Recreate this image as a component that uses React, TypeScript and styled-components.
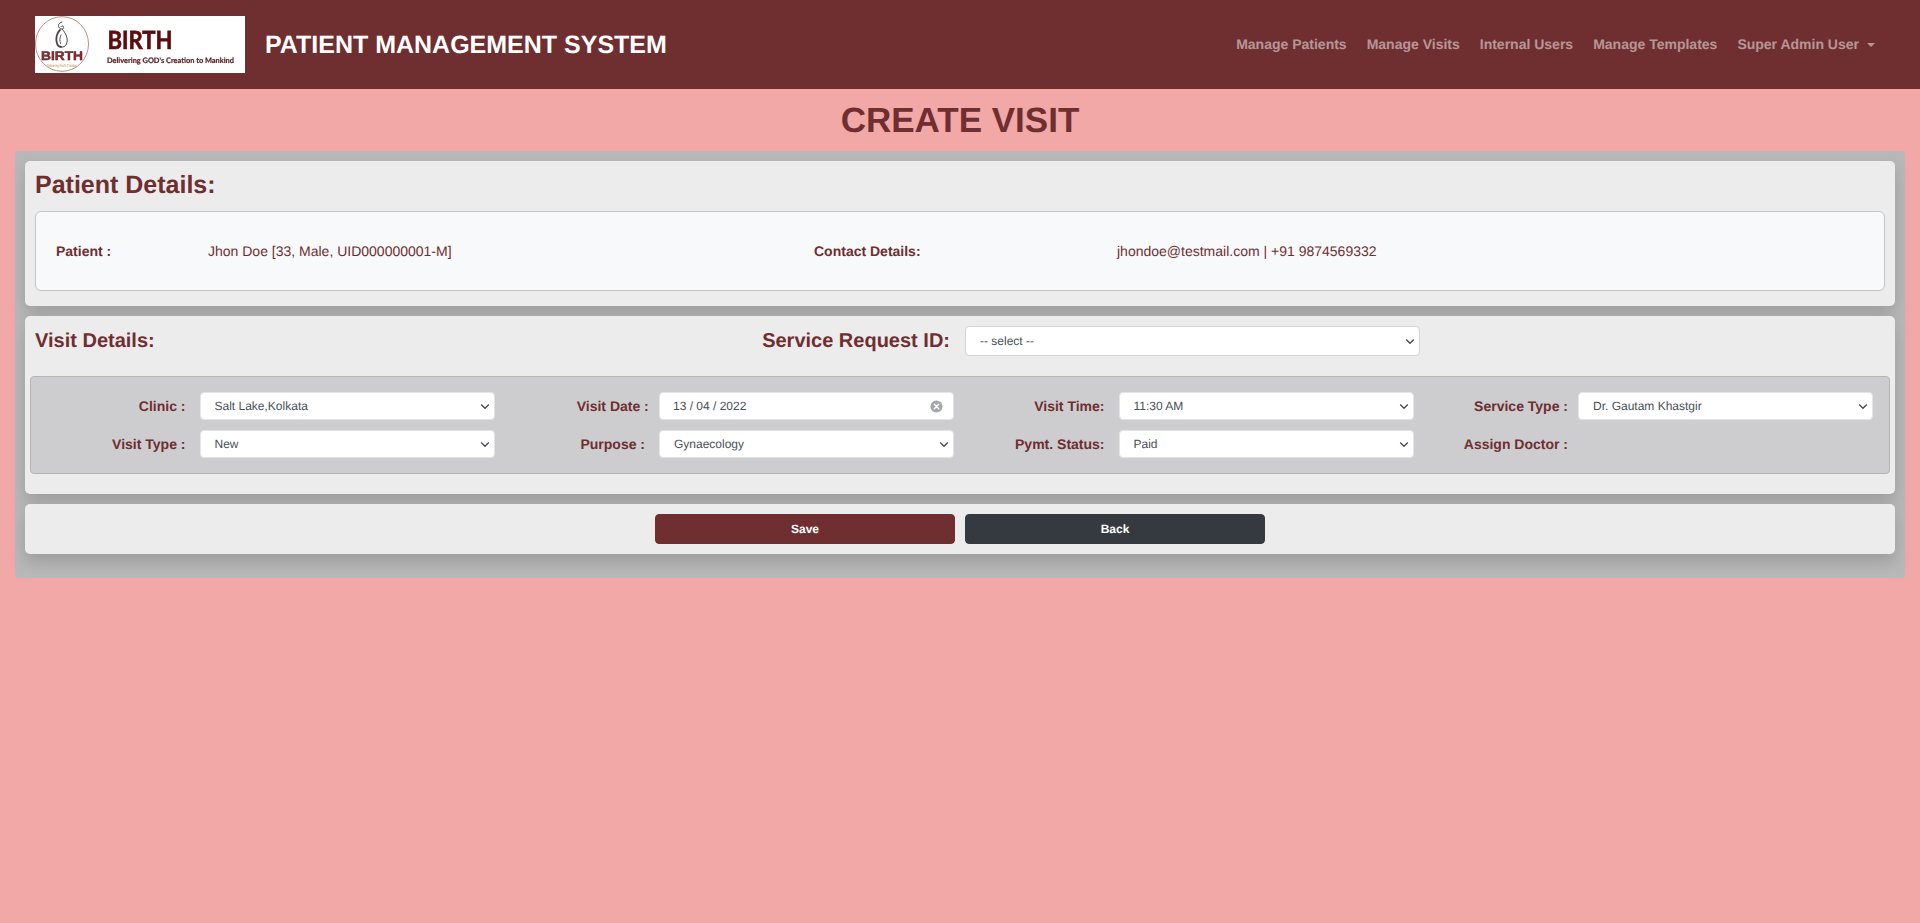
import React from "react";
import styled, { createGlobalStyle } from "styled-components";

const MAROON = "#6f2e30";
const PINK = "#f1a8a6";
const CHEVRON =
  "url(\"data:image/svg+xml,%3Csvg xmlns='http://www.w3.org/2000/svg' width='10' height='7' viewBox='0 0 10 7'%3E%3Cpath d='M1.200 1.500l3.800 3.800 3.800-3.800' fill='none' stroke='%23484b52' stroke-width='1.300'/%3E%3C/svg%3E\")";

const Global = createGlobalStyle`
  html, body { margin: 0; padding: 0; height: 100%; }
  body {
    background: ${PINK};
    font-family: "Liberation Sans", Arial, sans-serif;
    color: ${MAROON};
    text-rendering: geometricPrecision;
  }
  * { box-sizing: border-box; }
`;

const Page = styled.div`
  min-height: 923px;
  background: ${PINK};
`;

const Header = styled.header`
  height: 89px;
  background: ${MAROON};
  display: flex;
  align-items: center;
  padding: 0 45px 0 35px;
`;

const LogoFrame = styled.div`
  width: 210px;
  height: 57px;
  background: #fff;
  flex: none;
  margin-top: -1px;
`;

const LogoArt = styled.svg`
  display: block;
  filter: blur(0.35px);
`;

const Brand = styled.div`
  margin-left: 20px;
  padding-top: 1px;
  color: #fff;
  font-size: 25px;
  font-weight: 700;
  white-space: nowrap;
`;

const Nav = styled.nav`
  margin-left: auto;
  padding-bottom: 2px;
  display: flex;
  align-items: center;
  gap: 20px;
`;

const NavLink = styled.a`
  color: rgba(255, 255, 255, 0.5);
  font-size: 14px;
  font-weight: 700;
  white-space: nowrap;
`;

const Caret = styled.span`
  display: inline-block;
  margin-left: 8px;
  vertical-align: 2px;
  border-top: 4.2px solid rgba(255, 255, 255, 0.5);
  border-left: 4.2px solid transparent;
  border-right: 4.2px solid transparent;
`;

const Title = styled.h1`
  margin: 0;
  height: 62px;
  line-height: 63px;
  text-align: center;
  font-size: 35px;
  font-weight: 700;
  color: ${MAROON};
`;

const Panel = styled.main`
  margin: 0 15px;
  height: 427px;
  padding: 10px;
  background: #b8b8b8;
  border-radius: 4px;
  display: flex;
  flex-direction: column;
  gap: 10px;
`;

const Card = styled.section`
  background: #ececec;
  border-radius: 5px;
  box-shadow: 0 8px 16px rgba(0, 0, 0, 0.15);
`;

const PatientCard = styled(Card)`
  height: 145px;
  padding: 0 10px;
`;

const PatientHeading = styled.h3`
  margin: 0;
  height: 50px;
  line-height: 49px;
  font-size: 25px;
  font-weight: 700;
`;

const InfoBox = styled.div`
  height: 80px;
  background: #f8f9fa;
  border: 1px solid #c4c4c4;
  border-radius: 6px;
  display: grid;
  grid-template-columns: 152px 606px 303px 1fr;
  align-items: center;
  padding-left: 20px;
  font-size: 14px;
`;

const InfoLabel = styled.div`
  font-weight: 700;
`;

const VisitCard = styled(Card)`
  height: 178px;
  padding: 0 5px;
`;

const VisitHead = styled.div`
  height: 50px;
  margin-bottom: 10px;
  display: flex;
  align-items: center;
  padding-left: 5px;
`;

const VisitHeading = styled.h4`
  margin: 0;
  font-size: 20px;
  font-weight: 700;
`;

const RequestLabel = styled.label`
  margin-left: auto;
  font-size: 20px;
  font-weight: 700;
`;

const RequestSelect = styled.select`
  appearance: none;
  width: 455px;
  height: 30px;
  margin: 0 470px 0 15px;
  padding: 0 14px;
  background: #fff ${CHEVRON} no-repeat right 4px center;
  border: 1px solid #d2d4d8;
  border-radius: 4px;
  color: #495057;
  font: 12px "Liberation Sans", Arial, sans-serif;
  text-rendering: geometricPrecision;
`;

const FieldBox = styled.div`
  height: 98px;
  background: #cdcdcf;
  border: 1px solid #b4b4b4;
  border-radius: 4px;
  display: grid;
  grid-template-columns: repeat(4, 164.5px 295px);
  grid-auto-rows: 28px;
  row-gap: 10px;
  align-items: center;
  padding: 15px 0 0 4px;
`;

const FieldLabel = styled.label<{ $center?: boolean; $end: number }>`
  font-size: 14px;
  font-weight: 700;
  text-align: ${(p) => (p.$center ? "center" : "right")};
  padding-left: ${(p) => (p.$center ? 72 : 0)}px;
  padding-right: ${(p) => p.$end}px;
  white-space: nowrap;
`;

const FieldSelect = styled.select`
  appearance: none;
  width: 295px;
  height: 28px;
  padding: 0 14px;
  background: #fff ${CHEVRON} no-repeat right 4px center;
  border: 1px solid #e4e4e6;
  border-radius: 4px;
  color: #495057;
  font: 12px "Liberation Sans", Arial, sans-serif;
  text-rendering: geometricPrecision;
`;

const DateField = styled.div`
  width: 295px;
  height: 28px;
  display: flex;
  align-items: center;
  justify-content: space-between;
  padding: 0 10px 0 13px;
  background: #fff;
  border: 1px solid #e4e4e6;
  border-radius: 4px;
  color: #495057;
  font-size: 12px;
`;

const ActionCard = styled(Card)`
  height: 50px;
  display: flex;
  justify-content: center;
  align-items: center;
  gap: 10px;
`;

const ActionButton = styled.button<{ $dark?: boolean }>`
  width: 300px;
  height: 30px;
  border: 1px solid ${(p) => (p.$dark ? "#343a40" : MAROON)};
  border-radius: 4px;
  background: ${(p) => (p.$dark ? "#343a40" : MAROON)};
  color: #fff;
  font: 700 12px "Liberation Sans", Arial, sans-serif;
  text-rendering: geometricPrecision;
`;

function Logo() {
  return (
    <LogoArt width="210" height="57" viewBox="0 0 210 57" role="img" aria-label="Birth logo">
      <ellipse cx="27" cy="28" rx="26.500" ry="27.300" fill="none" stroke="#b98f88" strokeWidth="1" />
      <g fill="none" stroke="#4a4444" strokeLinecap="round">
        <path strokeWidth="1" d="M27 6c-3.500 1-4.500 4-2.500 6 2 1.800 4.500 1 4-1-.4-1.500-2-1.500-2.500-.5" />
        <path strokeWidth="1" d="M27 13c4 4 6.500 10 4.500 15-1 2.500-3.500 3.500-5.500 3" />
        <path strokeWidth="1.800" d="M25 14c-3.500 3-4.500 9-3 13.500 .8 2.500 2.500 3.500 4 3.500" />
        <path strokeWidth="0.900" d="M26 19c-1.500 2.500-1.500 6-.5 8.500" />
      </g>
      <text x="27" y="44" textAnchor="middle" fontFamily="'Liberation Sans', sans-serif" fontWeight="700" fontSize="12.500" fill="#a3262b" stroke="#2e2626" strokeWidth="0.450" textLength="42" lengthAdjust="spacingAndGlyphs">BIRTH</text>
      <text x="27" y="50.500" textAnchor="middle" fontFamily="'Liberation Sans', sans-serif" fontSize="4.200" fill="#b08a3c" textLength="30" lengthAdjust="spacingAndGlyphs">Delivering God's Creation</text>
      <text x="72.500" y="33" fontFamily="Lato, sans-serif" fontWeight="700" fontSize="25" fill="#5b0d10" stroke="#5b0d10" strokeWidth="0.700" textLength="65" lengthAdjust="spacingAndGlyphs">BIRTH</text>
      <text x="72" y="46.500" fontFamily="Lato, sans-serif" fontWeight="700" fontSize="7.600" fill="#5b1a1e" stroke="#5b1a1e" strokeWidth="0.200" textLength="127" lengthAdjust="spacingAndGlyphs">Delivering GOD's Creation to Mankind</text>
    </LogoArt>
  );
}

function ClearIcon() {
  return (
    <svg width="13" height="13" viewBox="0 0 13 13" aria-hidden="true">
      <circle cx="6.500" cy="6.500" r="6" fill="#a4a6ac" />
      <path d="M4.300 4.300l4.400 4.400M8.700 4.300l-4.400 4.400" stroke="#fff" strokeWidth="1.500" strokeLinecap="round" />
    </svg>
  );
}

const Choice = ({ value }: { value: string }) => (
  <FieldSelect defaultValue={value}>
    <option>{value}</option>
  </FieldSelect>
);

export default function App() {
  return (
    <Page>
      <Global />
      <Header>
        <LogoFrame>
          <Logo />
        </LogoFrame>
        <Brand>PATIENT MANAGEMENT SYSTEM</Brand>
        <Nav>
          <NavLink>Manage Patients</NavLink>
          <NavLink>Manage Visits</NavLink>
          <NavLink>Internal Users</NavLink>
          <NavLink>Manage Templates</NavLink>
          <NavLink>
            Super Admin User
            <Caret />
          </NavLink>
        </Nav>
      </Header>
      <Title>CREATE VISIT</Title>
      <Panel>
        <PatientCard>
          <PatientHeading>Patient Details:</PatientHeading>
          <InfoBox>
            <InfoLabel>Patient :</InfoLabel>
            <div>Jhon Doe [33, Male, UID000000001-M]</div>
            <InfoLabel>Contact Details:</InfoLabel>
            <div>jhondoe@testmail.com | +91 9874569332</div>
          </InfoBox>
        </PatientCard>
        <VisitCard>
          <VisitHead>
            <VisitHeading>Visit Details:</VisitHeading>
            <RequestLabel>Service Request ID:</RequestLabel>
            <RequestSelect>
              <option>-- select --</option>
            </RequestSelect>
          </VisitHead>
          <FieldBox>
            <FieldLabel $end={14}>Clinic :</FieldLabel>
            <Choice value="Salt Lake,Kolkata" />
            <FieldLabel $center $end={0}>Visit Date :</FieldLabel>
            <DateField>
              13 / 04 / 2022
              <ClearIcon />
            </DateField>
            <FieldLabel $end={14}>Visit Time:</FieldLabel>
            <Choice value="11:30 AM" />
            <FieldLabel $end={10}>Service Type :</FieldLabel>
            <Choice value="Dr. Gautam Khastgir" />
            <FieldLabel $end={14}>Visit Type :</FieldLabel>
            <Choice value="New" />
            <FieldLabel $center $end={0}>Purpose :</FieldLabel>
            <Choice value="Gynaecology" />
            <FieldLabel $end={14}>Pymt. Status:</FieldLabel>
            <Choice value="Paid" />
            <FieldLabel $end={10}>Assign Doctor :</FieldLabel>
          </FieldBox>
        </VisitCard>
        <ActionCard>
          <ActionButton>Save</ActionButton>
          <ActionButton $dark>Back</ActionButton>
        </ActionCard>
      </Panel>
    </Page>
  );
}
